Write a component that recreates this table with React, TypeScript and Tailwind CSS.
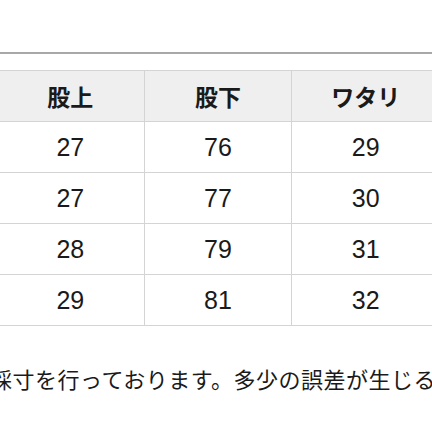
import React from "react";

const headers = ["股上", "股下", "ワタリ"];
const rows = [
  ["27", "76", "29"],
  ["27", "77", "30"],
  ["28", "79", "31"],
  ["29", "81", "32"],
];

export default function App() {
  return (
    <div
      className="w-[432px] h-[432px] bg-white overflow-hidden text-[#1a1a1a]"
      style={{ fontFamily: '"Noto Sans CJK JP", "Noto Sans", sans-serif' }}
    >
      <div className="h-[52px]" />
      <div className="h-[2px] bg-[#a8a8a8]" />
      <div className="h-[16px]" />
      <div className="ml-[-4px] w-[444px] grid grid-cols-3 border-t border-l border-[#d4d4d4]">
        {headers.map((h) => (
          <div
            key={h}
            className="h-[51px] flex items-center justify-center bg-[#efefef] border-r border-b border-[#d4d4d4] text-[23px] font-bold leading-none"
          >
            {h}
          </div>
        ))}
        {rows.map((r, i) =>
          r.map((c, j) => (
            <div
              key={`${i}-${j}`}
              className="h-[51px] flex items-center justify-center bg-white border-r border-b border-[#d4d4d4] text-[25px] leading-none font-['Liberation_Sans',sans-serif]"
            >
              {c}
            </div>
          ))
        )}
      </div>
      <div className="mt-[41px] ml-[-10px] whitespace-nowrap text-[22px] leading-[22px] tracking-[0.5px]">
        採寸を行っております。多少の誤差が生じる場合がございます。
      </div>
    </div>
  );
}
